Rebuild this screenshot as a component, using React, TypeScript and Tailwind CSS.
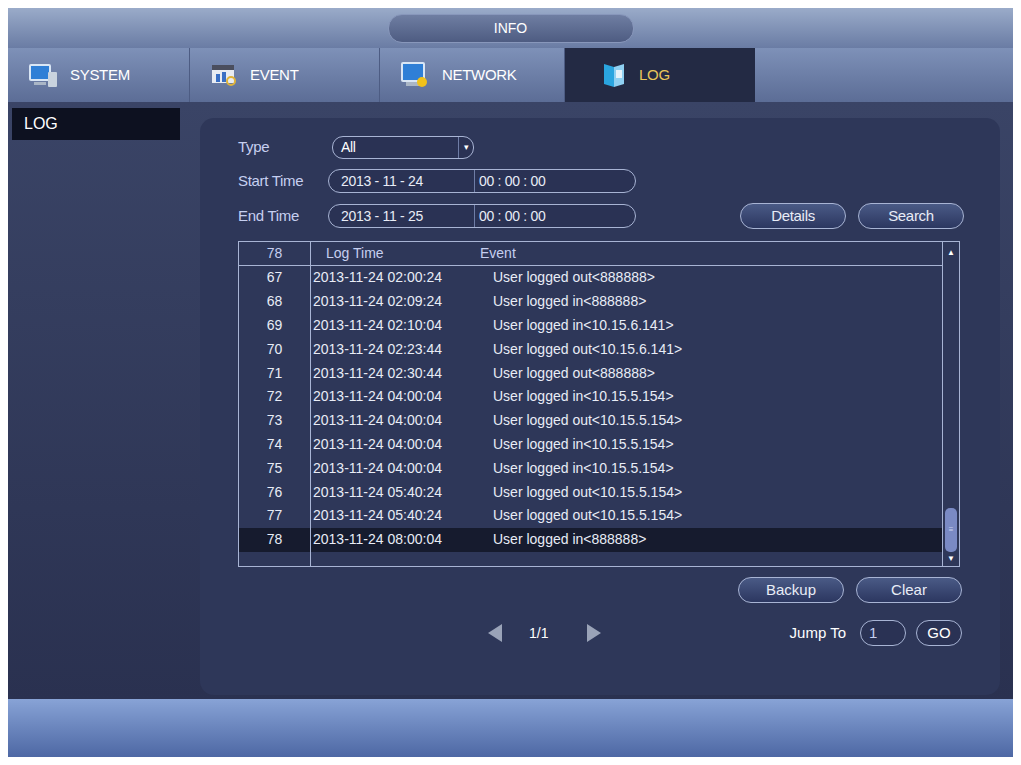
const rows = [
  ["67", "2013-11-24 02:00:24", "User logged out<888888>"],
  ["68", "2013-11-24 02:09:24", "User logged in<888888>"],
  ["69", "2013-11-24 02:10:04", "User logged in<10.15.6.141>"],
  ["70", "2013-11-24 02:23:44", "User logged out<10.15.6.141>"],
  ["71", "2013-11-24 02:30:44", "User logged out<888888>"],
  ["72", "2013-11-24 04:00:04", "User logged in<10.15.5.154>"],
  ["73", "2013-11-24 04:00:04", "User logged out<10.15.5.154>"],
  ["74", "2013-11-24 04:00:04", "User logged in<10.15.5.154>"],
  ["75", "2013-11-24 04:00:04", "User logged in<10.15.5.154>"],
  ["76", "2013-11-24 05:40:24", "User logged out<10.15.5.154>"],
  ["77", "2013-11-24 05:40:24", "User logged out<10.15.5.154>"],
  ["78", "2013-11-24 08:00:04", "User logged in<888888>"],
];

function Btn({ label, w = "w-[106px]" }: { label: string; w?: string }) {
  return (
    <div
      className={`${w} h-[26px] rounded-[13px] border border-[#a8b4d4] bg-gradient-to-b from-[#4a5a86] to-[#2c3760] flex items-center justify-center text-[15px] text-[#e8ecf6]`}
    >
      {label}
    </div>
  );
}

function Field({ date }: { date: string }) {
  return (
    <div className="w-[308px] h-[24px] rounded-[12px] border border-[#a8b4d4] bg-[#2a3254] flex items-center text-[14px] text-[#e8ecf6]">
      <span className="w-[146px] pl-3 border-r border-[#6f7da6] h-full flex items-center">{date}</span>
      <span className="pl-1">00 : 00 : 00</span>
    </div>
  );
}

function Tab({ label, active, icon, w }: { label: string; active?: boolean; icon: React.ReactNode; w: string }) {
  return (
    <div
      className={`${w} h-full flex items-center gap-3 pl-5 text-[15px] tracking-[-0.02em] ${
        active
          ? "bg-[#232a44] text-[#e8c65a] pl-9"
          : "bg-gradient-to-b from-[#7e91b8] to-[#5c6d96] text-white border-r border-[#4d5c83]"
      }`}
    >
      {icon}
      <span>{label}</span>
    </div>
  );
}

const Monitor = () => (
  <svg width="30" height="26" viewBox="0 0 30 26">
    <rect x="1" y="2" width="22" height="17" rx="2" fill="#d9e6f5" />
    <rect x="3" y="4" width="18" height="13" fill="#2f7fd6" />
    <rect x="20" y="10" width="9" height="15" rx="1" fill="#c9d3de" />
    <rect x="6" y="20" width="12" height="3" fill="#aab6c6" />
  </svg>
);
const EventIcon = () => (
  <svg width="28" height="26" viewBox="0 0 28 26">
    <rect x="2" y="3" width="22" height="18" fill="#e8ecf2" />
    <rect x="2" y="3" width="22" height="5" fill="#4a4e5e" />
    <rect x="6" y="12" width="4" height="8" fill="#3a6fc4" />
    <rect x="12" y="10" width="4" height="10" fill="#3a6fc4" />
    <circle cx="21" cy="19" r="4" fill="none" stroke="#e0b43a" strokeWidth="2" />
  </svg>
);
const NetIcon = () => (
  <svg width="30" height="28" viewBox="0 0 30 28">
    <rect x="1" y="1" width="24" height="20" rx="2" fill="#d9e6f5" />
    <rect x="3" y="3" width="20" height="16" fill="#2f7fd6" />
    <rect x="6" y="21" width="14" height="4" fill="#aab6c6" />
    <circle cx="22" cy="21" r="5" fill="#f1c21b" />
  </svg>
);
const LogIcon = () => (
  <svg width="26" height="28" viewBox="0 0 26 28">
    <path d="M3 3 L13 6 L13 26 L3 23 Z" fill="#2aa5e0" />
    <path d="M13 6 L23 3 L23 23 L13 26 Z" fill="#8fd0f2" />
    <rect x="15" y="9" width="6" height="8" fill="#e6f3fb" />
  </svg>
);

export default function App() {
  return (
    <div className="w-[1021px] h-[765px] bg-white p-[8px]" style={{ fontFamily: "'Liberation Sans', Arial, sans-serif" }}>
      <div className="w-[1005px] h-[749px] flex flex-col bg-[#2a3150]">
        {/* title */}
        <div className="h-[40px] bg-gradient-to-b from-[#9aabc9] to-[#6a7ca4] flex items-center justify-center">
          <div className="w-[246px] h-[29px] rounded-[14px] bg-gradient-to-b from-[#6f7ea2] to-[#4e5c82] border border-[#8897bb] flex items-center justify-center text-white text-[14px]">
            INFO
          </div>
        </div>
        {/* tabs */}
        <div className="h-[54px] flex bg-gradient-to-b from-[#7e91b8] to-[#5c6d96]">
          <Tab w="w-[182px]" label="SYSTEM" icon={<Monitor />} />
          <Tab w="w-[190px]" label="EVENT" icon={<EventIcon />} />
          <Tab w="w-[185px]" label="NETWORK" icon={<NetIcon />} />
          <Tab w="w-[190px]" label="LOG" active icon={<LogIcon />} />
        </div>
        {/* body */}
        <div className="h-[597px] flex bg-gradient-to-b from-[#3a4466] to-[#2a3150] pt-[6px]">
          <div className="w-[192px] pl-[4px] shrink-0">
            <div className="w-[168px] h-[32px] bg-[#0d1120] text-white text-[16px] flex items-center pl-[12px]">LOG</div>
          </div>
          <div className="mt-[10px] mb-[4px] w-[800px] rounded-[14px] bg-[#2e3759] pl-[38px] pr-[38px] pt-[18px] flex flex-col">
            <div className="flex flex-col gap-[10px] text-[15px] text-[#c6cff0] tracking-[-0.02em]">
              <div className="flex items-center">
                <span className="w-[94px]">Type</span>
                <div className="w-[142px] h-[23px] rounded-[11px] border border-[#a8b4d4] bg-[#2a3254] flex items-center text-white text-[14px]">
                  <span className="flex-1 pl-2 border-r border-[#6f7da6]">All</span>
                  <span className="w-[14px] text-[9px] text-center">▾</span>
                </div>
              </div>
              <div className="flex items-center">
                <span className="w-[90px]">Start Time</span>
                <Field date="2013 - 11 - 24" />
              </div>
              <div className="flex items-center">
                <span className="w-[90px]">End Time</span>
                <Field date="2013 - 11 - 25" />
                <div className="ml-auto flex gap-[12px] mr-[-2px]">
                  <Btn label="Details" />
                  <Btn label="Search" />
                </div>
              </div>
            </div>
            <div className="mt-[12px] w-[722px] h-[326px] border border-[#a8b4d4] flex text-[14px] text-[#e8ecf6]">
              <div className="flex-1 flex flex-col relative">
                <div className="absolute left-[71px] top-0 bottom-0 border-l border-[#a8b4d4]" />
                <div className="h-[24px] flex items-center border-b border-[#a8b4d4] text-[#c6cff0]">
                  <span className="w-[71px] text-center">78</span>
                  <span className="w-[170px] pl-[16px]">Log Time</span>
                  <span>Event</span>
                </div>
                {rows.map((r) => (
                  <div
                    key={r[0]}
                    className={`h-[23.8px] flex items-center ${r[0] === "78" ? "bg-[#161b2e]" : ""}`}
                  >
                    <span className="w-[71px] text-center">{r[0]}</span>
                    <span className="w-[183px] pl-[3px]">{r[1]}</span>
                    <span>{r[2]}</span>
                  </div>
                ))}
              </div>
              <div className="w-[17px] border-l border-[#a8b4d4] flex flex-col items-center text-[8px] text-white">
                <span className="h-[22px] flex items-center">▲</span>
                <div className="flex-1" />
                <div className="w-[12px] h-[44px] rounded-[5px] bg-[#7a8ac4] flex items-center justify-center text-[8px] text-[#c9d4f0]">≡</div>
                <span className="h-[14px] flex items-center">▼</span>
              </div>
            </div>
            <div className="mt-[10px] flex justify-end gap-[12px]">
              <Btn label="Backup" />
              <Btn label="Clear" />
            </div>
            <div className="mt-[17px] flex items-center text-[14px] text-white">
              <div className="w-[249px]" />
              <svg width="16" height="20" viewBox="0 0 16 20"><path d="M15 1 L1 10 L15 19 Z" fill="#9aa3b8" /></svg>
              <span className="ml-[26px]">1/1</span>
              <svg className="ml-[38px]" width="16" height="20" viewBox="0 0 16 20"><path d="M1 1 L15 10 L1 19 Z" fill="#9aa3b8" /></svg>
              <div className="ml-auto flex items-center gap-[10px] text-[15px]">
                <span className="mr-[4px]">Jump To</span>
                <div className="w-[46px] h-[26px] rounded-[13px] border border-[#a8b4d4] bg-[#2a3254] pl-[8px] flex items-center text-[#c6cff0]">1</div>
                <div className="w-[46px] h-[26px] rounded-[13px] border border-[#a8b4d4] bg-[#2a3254] flex items-center justify-center">GO</div>
              </div>
            </div>
          </div>
        </div>
        {/* bottom */}
        <div className="flex-1 bg-gradient-to-b from-[#88a3d6] to-[#4e68a4]" />
      </div>
    </div>
  );
}
